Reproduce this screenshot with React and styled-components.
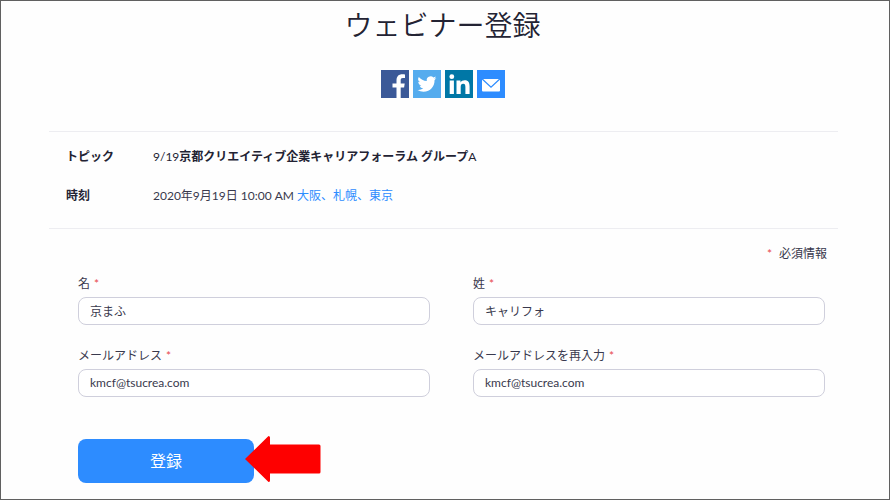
import React from "react";
import styled, { createGlobalStyle } from "styled-components";

const GlobalStyle = createGlobalStyle`
  * {
    box-sizing: border-box;
  }
  body {
    margin: 0;
    background: #fefefe;
    color: #39394d;
    font-family: Lato, "Noto Sans CJK JP", sans-serif;
    font-size: 12px;
    line-height: 18px;
  }
`;

const Page = styled.main`
  min-height: 100vh;
  padding: 0 51px 16px 48px;
  border: 1px solid #606060;
`;

const Title = styled.h1`
  margin: 0;
  padding: 4px 2px 0 0;
  color: #232333;
  font-size: 28px;
  font-weight: 350;
  line-height: 40px;
  text-align: center;
`;

const ShareBar = styled.nav`
  display: flex;
  justify-content: center;
  gap: 4px;
  margin: 25px 0 33px;
  padding-right: 1px;
`;

const ShareLink = styled.a`
  display: block;
  width: 28px;
  height: 28px;
  background: ${(props) => props.$color};

  svg {
    display: block;
    width: 28px;
    height: 28px;
    fill: #fff;
  }
`;

const Details = styled.dl`
  display: grid;
  grid-template-columns: 87px 1fr;
  row-gap: 21px;
  margin: 0;
  padding: 16px 17px 23px;
  border: solid #ededf1;
  border-width: 1px 0;
`;

const Term = styled.dt`
  color: #232333;
  font-weight: 700;
`;

const Value = styled.dd`
  margin: 0;
  color: ${(props) => (props.$strong ? "#232333" : "#39394d")};
  font-weight: ${(props) => (props.$strong ? 700 : 400)};
`;

const Latin = styled.span`
  font-weight: 400;
`;

const ZoneLink = styled.a`
  color: #2d8cff;
  text-decoration: none;
`;

const RequiredNote = styled.p`
  margin: 0;
  padding: 16px 11px 0 0;
  text-align: right;
`;

const Star = styled.span`
  margin: 0 ${(props) => (props.$spaced ? "7px" : "0")} 0 ${(props) => (props.$spaced ? "0" : "4px")};
  color: #e8484c;
`;

const Form = styled.form`
  padding: 12px 13px 0 29px;
`;

const Fields = styled.div`
  display: grid;
  grid-template-columns: 1fr 1fr;
  gap: 22px 43px;
`;

const Field = styled.div`
  display: flex;
  flex-direction: column;
  gap: 4px;
`;

const Input = styled.input`
  width: 100%;
  height: 28px;
  padding: 0 11px 2px;
  border: 1px solid #cfcfdc;
  border-radius: 8px;
  background: #fff;
  color: #39394d;
  font: inherit;
`;

const Actions = styled.div`
  position: relative;
  width: 176px;
  margin-top: 42px;
`;

const Submit = styled.button`
  display: block;
  width: 100%;
  height: 44px;
  padding: 0;
  border: 0;
  border-radius: 8px;
  background: #2d8cff;
  color: #fff;
  font: inherit;
  font-size: 16px;
`;

// sits over the right edge of the button
const Arrow = styled.svg`
  position: absolute;
  top: -3px;
  left: 167px;
  width: 76px;
  height: 46px;
  fill: #fe0000;
  pointer-events: none;
`;

const shares = [
  {
    name: "Facebook",
    color: "#3b5998",
    icon: (
      <path d="M15.500 28V17.500h-4v-4h4v-3.200c0-4 2.300-6.100 5.800-6.100 1.100 0 2 .1 2.700.2v3.700h-2.100c-1.700 0-2.200.9-2.200 2.200v3.200h4l-.6 4h-3.400V28z" />
    ),
  },
  {
    name: "Twitter",
    color: "#55acee",
    icon: (
      <path
        transform="translate(4.5 4.5) scale(.79)"
        d="M23.95 4.57a10 10 0 0 1-2.82.77 4.96 4.96 0 0 0 2.16-2.72c-.95.56-2 .96-3.12 1.19a4.92 4.92 0 0 0-8.38 4.48C7.69 8.1 4.07 6.13 1.64 3.16a4.93 4.93 0 0 0 1.52 6.57 4.9 4.9 0 0 1-2.23-.61v.06c0 2.39 1.7 4.38 3.95 4.83a5 5 0 0 1-2.21.08 4.94 4.94 0 0 0 4.6 3.42A9.87 9.87 0 0 1 0 19.54a13.94 13.94 0 0 0 7.55 2.21c9.05 0 14-7.5 14-13.98l-.02-.64a9.94 9.94 0 0 0 2.42-2.56z"
      />
    ),
  },
  {
    name: "LinkedIn",
    color: "#0077a6",
    icon: (
      <>
        <circle cx="6.8" cy="6.7" r="2.4" />
        <path d="M4.7 10.5h4.2V24H4.7zM11.5 10.5h4v1.9c.7-1.3 2.2-2.2 4.1-2.2 4.1 0 5 2.6 5 6.3V24h-4.2v-6.8c0-1.8-.2-3.5-2.2-3.5-2.1 0-2.5 1.6-2.5 3.4V24h-4.2z" />
      </>
    ),
  },
  {
    name: "Email",
    color: "#2d8cff",
    icon: (
      <>
        <rect x="5" y="9" width="18" height="12.5" rx="1" />
        <path
          d="M5.2 9l8.8 8.2L22.8 9"
          fill="none"
          stroke="#2d8cff"
          strokeWidth="1.2"
        />
      </>
    ),
  },
];

const fields = [
  { id: "first_name", label: "名", type: "text", value: "京まふ" },
  { id: "last_name", label: "姓", type: "text", value: "キャリフォ" },
  { id: "email", label: "メールアドレス", type: "email", value: "kmcf@tsucrea.com" },
  { id: "confirm_email", label: "メールアドレスを再入力", type: "email", value: "kmcf@tsucrea.com" },
];

const App = () => {
  return (
    <Page lang="ja">
      <GlobalStyle />
      <Title>ウェビナー登録</Title>

      <ShareBar>
        {shares.map((share) => (
          <ShareLink key={share.name} href="#" aria-label={share.name} $color={share.color}>
            <svg viewBox="0 0 28 28">{share.icon}</svg>
          </ShareLink>
        ))}
      </ShareBar>

      <Details>
        <Term>トピック</Term>
        <Value $strong>
          <Latin>9/19</Latin>京都クリエイティブ企業キャリアフォーラム グループ<Latin>A</Latin>
        </Value>
        <Term>時刻</Term>
        <Value>
          2020年9月19日 10:00 AM <ZoneLink href="#">大阪、札幌、東京</ZoneLink>
        </Value>
      </Details>

      <RequiredNote>
        <Star $spaced>*</Star>必須情報
      </RequiredNote>

      <Form onSubmit={(e) => e.preventDefault()}>
        <Fields>
          {fields.map((field) => (
            <Field key={field.id}>
              <label htmlFor={field.id}>
                {field.label}
                <Star>*</Star>
              </label>
              <Input id={field.id} type={field.type} defaultValue={field.value} required />
            </Field>
          ))}
        </Fields>
        <Actions>
          <Submit type="submit">登録</Submit>
          <Arrow viewBox="0 0 76 46" aria-hidden="true">
            <path d="M0 23 23.500 0Q25 0 25 1.500V8.500H74Q75.500 8.500 75.500 10V36Q75.500 37.500 74 37.500H25V44.500Q25 46 23.500 46Z" />
          </Arrow>
        </Actions>
      </Form>
    </Page>
  );
};

export default App;
